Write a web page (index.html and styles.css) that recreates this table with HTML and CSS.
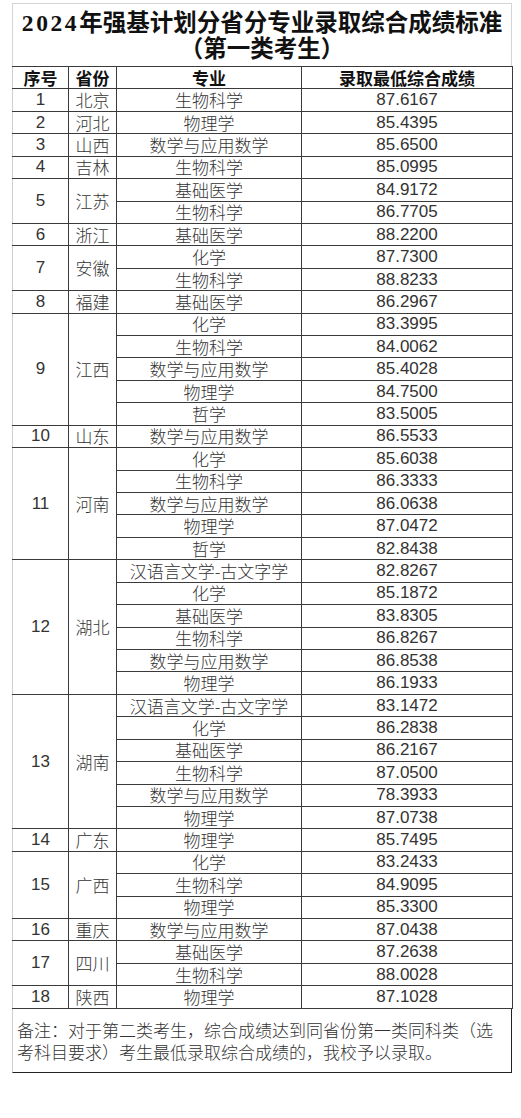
FILE: index.html
```html
<!DOCTYPE html>
<html lang="zh-CN">
<head>
<meta charset="utf-8">
<title>2024年强基计划分省分专业录取综合成绩标准</title>
<link rel="stylesheet" href="styles.css">
</head>
<body>
<div class="sheet">
  <div class="title">
    <div class="title-line"><span class="year">2024</span>年强基计划分省分专业录取综合成绩标准</div>
    <div class="title-line">（第一类考生）</div>
  </div>
  <table class="grid">
    <colgroup>
      <col class="c-no"><col class="c-prov"><col class="c-major"><col class="c-score">
    </colgroup>
    <thead>
      <tr><th>序号</th><th>省份</th><th>专业</th><th>录取最低综合成绩</th></tr>
    </thead>
    <tbody>
      <tr><td class="num">1</td><td>北京</td><td>生物科学</td><td class="num">87.6167</td></tr>
      <tr><td class="num">2</td><td>河北</td><td>物理学</td><td class="num">85.4395</td></tr>
      <tr><td class="num">3</td><td>山西</td><td>数学与应用数学</td><td class="num">85.6500</td></tr>
      <tr><td class="num">4</td><td>吉林</td><td>生物科学</td><td class="num">85.0995</td></tr>
      <tr><td class="num" rowspan="2">5</td><td rowspan="2">江苏</td><td>基础医学</td><td class="num">84.9172</td></tr>
      <tr><td>生物科学</td><td class="num">86.7705</td></tr>
      <tr><td class="num">6</td><td>浙江</td><td>基础医学</td><td class="num">88.2200</td></tr>
      <tr><td class="num" rowspan="2">7</td><td rowspan="2">安徽</td><td>化学</td><td class="num">87.7300</td></tr>
      <tr><td>生物科学</td><td class="num">88.8233</td></tr>
      <tr><td class="num">8</td><td>福建</td><td>基础医学</td><td class="num">86.2967</td></tr>
      <tr><td class="num" rowspan="5">9</td><td rowspan="5">江西</td><td>化学</td><td class="num">83.3995</td></tr>
      <tr><td>生物科学</td><td class="num">84.0062</td></tr>
      <tr><td>数学与应用数学</td><td class="num">85.4028</td></tr>
      <tr><td>物理学</td><td class="num">84.7500</td></tr>
      <tr><td>哲学</td><td class="num">83.5005</td></tr>
      <tr><td class="num">10</td><td>山东</td><td>数学与应用数学</td><td class="num">86.5533</td></tr>
      <tr><td class="num" rowspan="5">11</td><td rowspan="5">河南</td><td>化学</td><td class="num">85.6038</td></tr>
      <tr><td>生物科学</td><td class="num">86.3333</td></tr>
      <tr><td>数学与应用数学</td><td class="num">86.0638</td></tr>
      <tr><td>物理学</td><td class="num">87.0472</td></tr>
      <tr><td>哲学</td><td class="num">82.8438</td></tr>
      <tr><td class="num" rowspan="6">12</td><td rowspan="6">湖北</td><td>汉语言文学-古文字学</td><td class="num">82.8267</td></tr>
      <tr><td>化学</td><td class="num">85.1872</td></tr>
      <tr><td>基础医学</td><td class="num">83.8305</td></tr>
      <tr><td>生物科学</td><td class="num">86.8267</td></tr>
      <tr><td>数学与应用数学</td><td class="num">86.8538</td></tr>
      <tr><td>物理学</td><td class="num">86.1933</td></tr>
      <tr><td class="num" rowspan="6">13</td><td rowspan="6">湖南</td><td>汉语言文学-古文字学</td><td class="num">83.1472</td></tr>
      <tr><td>化学</td><td class="num">86.2838</td></tr>
      <tr><td>基础医学</td><td class="num">86.2167</td></tr>
      <tr><td>生物科学</td><td class="num">87.0500</td></tr>
      <tr><td>数学与应用数学</td><td class="num">78.3933</td></tr>
      <tr><td>物理学</td><td class="num">87.0738</td></tr>
      <tr><td class="num">14</td><td>广东</td><td>物理学</td><td class="num">85.7495</td></tr>
      <tr><td class="num" rowspan="3">15</td><td rowspan="3">广西</td><td>化学</td><td class="num">83.2433</td></tr>
      <tr><td>生物科学</td><td class="num">84.9095</td></tr>
      <tr><td>物理学</td><td class="num">85.3300</td></tr>
      <tr><td class="num">16</td><td>重庆</td><td>数学与应用数学</td><td class="num">87.0438</td></tr>
      <tr><td class="num" rowspan="2">17</td><td rowspan="2">四川</td><td>基础医学</td><td class="num">87.2638</td></tr>
      <tr><td>生物科学</td><td class="num">88.0028</td></tr>
      <tr><td class="num">18</td><td>陕西</td><td>物理学</td><td class="num">87.1028</td></tr>
    </tbody>
  </table>
  <div class="note">备注：对于第二类考生，综合成绩达到同省份第一类同科类（选考科目要求）考生最低录取综合成绩的，我校予以录取。</div>
</div>
</body>
</html>
```

FILE: styles.css
```css
html, body {
  margin: 0;
  padding: 0;
  background: #ffffff;
}

body {
  font-family: "Noto Sans CJK SC", sans-serif;
  color: #333333;
}

.sheet {
  width: 500px;
  margin: 3px 0 0 12px;
}

.title {
  border: 1px solid #d4d4d4;
  border-bottom: none;
  padding: 6px 0 4px;
  text-align: center;
  font-family: "Liberation Serif", "Noto Sans CJK SC", serif;
  font-weight: bold;
  font-size: 23.5px;
  line-height: 26px;
  color: #111111;
  white-space: nowrap;
}

.title .year {
  letter-spacing: 2.6px;
}

.grid {
  width: 500px;
  border-collapse: collapse;
  table-layout: fixed;
  font-size: 17px;
}

.c-no { width: 56px; }
.c-prov { width: 48px; }
.c-major { width: 185px; }
.c-score { width: 211px; }

.grid th,
.grid td {
  height: 21.43px;
  padding: 0;
  border: 1px solid #3a3a3a;
  text-align: center;
  vertical-align: middle;
  line-height: 20px;
  white-space: nowrap;
}

.grid td {
  font-weight: 300;
}

.grid th {
  font-weight: bold;
  color: #111111;
}

.grid tr > :first-child {
  border-left-color: #cfcfcf;
}

.grid .num {
  font-family: "Liberation Sans", "Noto Sans CJK SC", sans-serif;
  font-weight: normal;
}

.note {
  border-left: 1px solid #cfcfcf;
  border-right: 1px solid #222222;
  border-bottom: 1px solid #222222;
  padding: 10px 12px 9px 4px;
  font-size: 17px;
  font-weight: 300;
  line-height: 22px;
  color: #333333;
}
```
